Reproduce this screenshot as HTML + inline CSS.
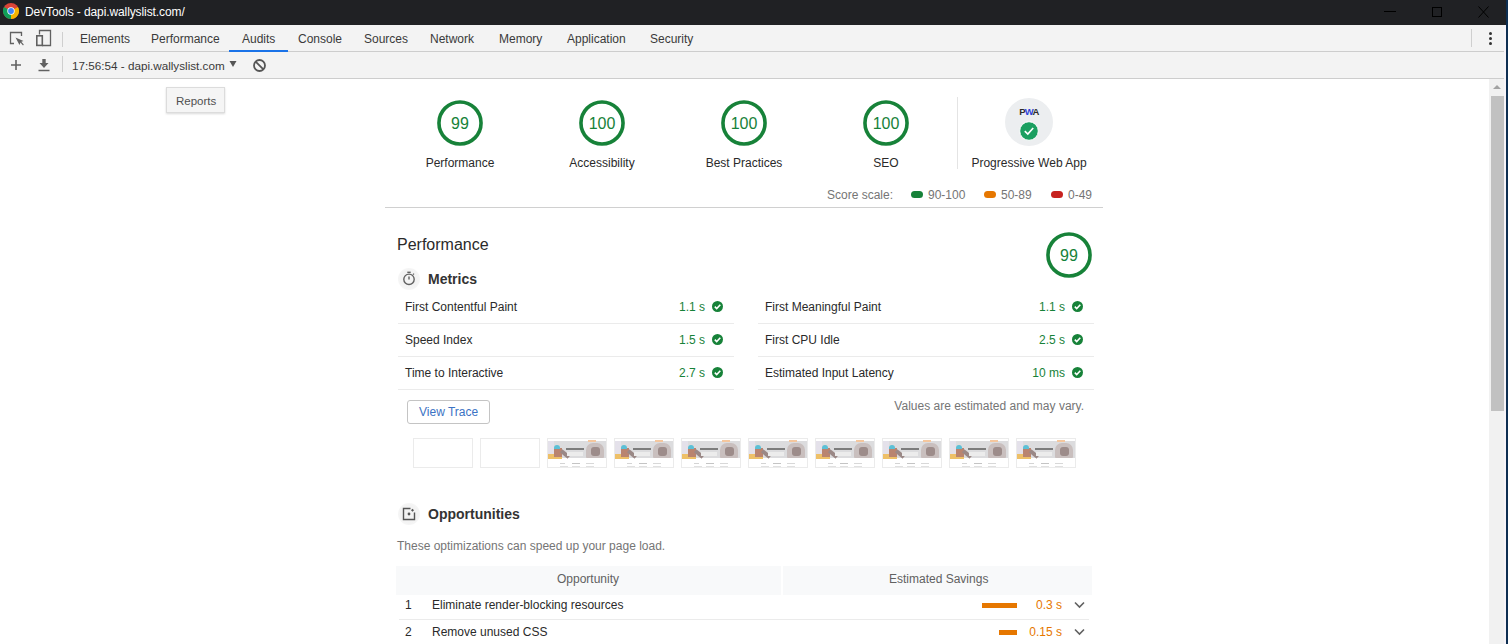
<!DOCTYPE html>
<html><head><meta charset="utf-8">
<style>
*{margin:0;padding:0;box-sizing:border-box}
html,body{width:1508px;height:644px;overflow:hidden;background:#fff;font-family:"Liberation Sans",sans-serif;position:relative}
.a{position:absolute}
.t{position:absolute;white-space:nowrap;line-height:12px;font-size:12px}
#title{left:0;top:0;width:1508px;height:25px;background:#202124}
#tb1{left:0;top:25px;width:1504px;height:27px;background:#f3f3f3;border-bottom:1px solid #cdcdcd}
#tb2{left:0;top:52px;width:1504px;height:27px;background:#f3f3f3;border-bottom:1px solid #cdcdcd}
.tab{color:#3a3a3a}
.sep{position:absolute;width:1px;background:#cfcfcf}
.lab{color:#2a2a2a}
.gray{color:#757575}
.green{color:#178239}
.row{position:absolute;height:1px;background:#ebebeb}
.chk{position:absolute;width:11px;height:11px}
.fr{position:absolute;width:60px;height:30px;border:1px solid #ebebeb;background:#fff;overflow:hidden}
</style></head><body>
<div id="title" class="a">
  <svg class="a" style="left:3px;top:3px" width="16" height="16" viewBox="0 0 16 16">
    <circle cx="8" cy="8" r="8" fill="#db4437"/>
    <path d="M8 8 L1.07 4 A8 8 0 0 0 8 16 Z" fill="#0f9d58"/>
    <path d="M8 8 L8 16 A8 8 0 0 0 14.93 4 Z" fill="#f4b400"/>
    <circle cx="8" cy="8" r="3.7" fill="#fff"/>
    <circle cx="8" cy="8" r="2.9" fill="#4285f4"/>
  </svg>
  <div class="t" style="left:25px;top:6px;color:#fff;letter-spacing:-0.1px">DevTools - dapi.wallyslist.com/</div>
  <div class="a" style="left:1384px;top:11px;width:12px;height:1px;background:#000"></div>
  <div class="a" style="left:1432px;top:7px;width:10px;height:10px;border:1px solid #000"></div>
  <svg class="a" style="left:1478px;top:6px" width="11" height="12" viewBox="0 0 11 12"><path d="M0.5 0.5 L10.5 11.5 M10.5 0.5 L0.5 11.5" stroke="#000" stroke-width="1"/></svg>
</div>
<div class="a" style="left:1506px;top:0;width:2px;height:644px;background:#0e2f52"></div>
<div class="a" style="left:1504px;top:25px;width:2px;height:619px;background:#f7f4f8"></div>

<div id="tb1" class="a">
<svg class="a" style="left:9px;top:6px" width="16" height="16" viewBox="0 0 16 16">
    <path d="M5 12.5 H1.5 V1.5 H12.5 V5" fill="none" stroke="#616161" stroke-width="1.3"/>
    <path d="M6.5 6.5 L10.5 14 L11.5 11.5 L14 14.5 L14.8 13.6 L12.3 10.8 L14.5 10 Z" fill="#616161"/>
  </svg>
  <svg class="a" style="left:35px;top:4px" width="17" height="18" viewBox="0 0 17 18">
    <path d="M4.5 5.5 V1.5 H15.5 V16.5 H7" fill="none" stroke="#616161" stroke-width="1.3"/>
    <rect x="1.8" y="6.8" width="5.5" height="9.6" fill="none" stroke="#616161" stroke-width="1.6"/>
  </svg>
  <div class="sep" style="left:62px;top:7px;height:15px"></div>
<div class="t tab" style="left:80px;top:8px">Elements</div>
<div class="t tab" style="left:151px;top:8px">Performance</div>
<div class="t tab" style="left:242px;top:8px">Audits</div>
<div class="t tab" style="left:298px;top:8px">Console</div>
<div class="t tab" style="left:364px;top:8px">Sources</div>
<div class="t tab" style="left:430px;top:8px">Network</div>
<div class="t tab" style="left:499px;top:8px">Memory</div>
<div class="t tab" style="left:567px;top:8px">Application</div>
<div class="t tab" style="left:650px;top:8px">Security</div>
<div class="a" style="left:229px;top:25px;width:59px;height:2px;background:#1a73e8"></div>
  <div class="sep" style="left:1471px;top:4px;height:18px"></div>
  <div class="a" style="left:1489px;top:7px;width:3px;height:3px;border-radius:50%;background:#333"></div>
  <div class="a" style="left:1489px;top:12px;width:3px;height:3px;border-radius:50%;background:#333"></div>
  <div class="a" style="left:1489px;top:17px;width:3px;height:3px;border-radius:50%;background:#333"></div>
</div>
<div id="tb2" class="a">
  <svg class="a" style="left:10px;top:7px" width="12" height="12" viewBox="0 0 12 12"><path d="M6 1 V11 M1 6 H11" stroke="#616161" stroke-width="1.6"/></svg>
  <svg class="a" style="left:37px;top:6px" width="14" height="14" viewBox="0 0 14 14">
    <path d="M5.3 1 H8.7 V5 H11.5 L7 10 L2.5 5 H5.3 Z" fill="#616161"/>
    <path d="M1.5 12.5 H12.5" stroke="#616161" stroke-width="1.5"/>
  </svg>
  <div class="sep" style="left:62px;top:4px;height:16px"></div>
  <div class="t" style="left:72px;top:8px;color:#3a3a3a;font-size:11.7px">17:56:54 - dapi.wallyslist.com</div>
  <svg class="a" style="left:229px;top:8px" width="8" height="8" viewBox="0 0 8 8"><path d="M0.5 1 H7.5 L4 7 Z" fill="#555"/></svg>
  <svg class="a" style="left:252px;top:6px" width="15" height="15" viewBox="0 0 15 15"><circle cx="7.5" cy="7.5" r="5.5" fill="none" stroke="#555" stroke-width="1.8"/><path d="M3.6 3.6 L11.4 11.4" stroke="#555" stroke-width="1.8"/></svg>
</div>
<div class="a" style="left:166px;top:87px;width:59px;height:26px;background:#f5f5f5;border:1px solid #dcdcdc;box-shadow:0 1px 2px rgba(0,0,0,0.15)"></div>
<div class="t" style="left:176px;top:95px;color:#505050;font-size:11.5px">Reports</div>
<div class="a" style="left:1489px;top:79px;width:15px;height:565px;background:#f1f1f1"></div>
<svg class="a" style="left:1493px;top:84px" width="8" height="6" viewBox="0 0 8 6"><path d="M0 5 L4 1 L8 5 Z" fill="#a3a3a3"/></svg>
<div class="a" style="left:1491px;top:96px;width:13px;height:315px;background:#c1c1c1"></div>

<svg class="a" style="left:436px;top:99px" width="48" height="48" viewBox="0 0 48 48"><circle cx="24" cy="24" r="21.05" fill="none" stroke="#178239" stroke-width="3.6"/></svg><div class="t green" style="left:420px;width:80px;text-align:center;top:116px;font-size:16px;line-height:16px">99</div>
<div class="t lab" style="left:400px;width:120px;text-align:center;top:157px">Performance</div>
<svg class="a" style="left:578px;top:99px" width="48" height="48" viewBox="0 0 48 48"><circle cx="24" cy="24" r="21.05" fill="none" stroke="#178239" stroke-width="3.6"/></svg><div class="t green" style="left:562px;width:80px;text-align:center;top:116px;font-size:16px;line-height:16px">100</div>
<div class="t lab" style="left:542px;width:120px;text-align:center;top:157px">Accessibility</div>
<svg class="a" style="left:720px;top:99px" width="48" height="48" viewBox="0 0 48 48"><circle cx="24" cy="24" r="21.05" fill="none" stroke="#178239" stroke-width="3.6"/></svg><div class="t green" style="left:704px;width:80px;text-align:center;top:116px;font-size:16px;line-height:16px">100</div>
<div class="t lab" style="left:684px;width:120px;text-align:center;top:157px">Best Practices</div>
<svg class="a" style="left:862px;top:99px" width="48" height="48" viewBox="0 0 48 48"><circle cx="24" cy="24" r="21.05" fill="none" stroke="#178239" stroke-width="3.6"/></svg><div class="t green" style="left:846px;width:80px;text-align:center;top:116px;font-size:16px;line-height:16px">100</div>
<div class="t lab" style="left:826px;width:120px;text-align:center;top:157px">SEO</div>
<div class="a" style="left:957px;top:97px;width:1px;height:72px;background:#e4e4e4"></div>
<div class="a" style="left:1005px;top:98px;width:48px;height:48px;border-radius:50%;background:#eceef0"></div>
<div class="t" style="left:1000px;width:58px;text-align:center;top:107px;font-size:9.5px;line-height:10px;font-weight:bold;color:#2b2b2b;letter-spacing:-0.7px">P<span style="color:#2c3fd8">W</span>A</div>
<svg class="a" style="left:1019px;top:121px" width="20" height="20" viewBox="0 0 20 20"><circle cx="10" cy="10" r="9.3" fill="#1a9f60" stroke="#fff" stroke-width="1"/><path d="M5.8 10.2 L8.8 13 L14.2 7" fill="none" stroke="#fff" stroke-width="1.7"/></svg>
<div class="t lab" style="left:969px;width:120px;text-align:center;top:157px">Progressive Web App</div>

<div class="t gray" style="left:827px;top:189px">Score scale:</div>
<div class="a" style="left:911px;top:191px;width:12px;height:7px;border-radius:4px;background:#178239"></div>
<div class="t gray" style="left:928px;top:189px">90-100</div>
<div class="a" style="left:984px;top:191px;width:12px;height:7px;border-radius:4px;background:#e67700"></div>
<div class="t gray" style="left:1001px;top:189px">50-89</div>
<div class="a" style="left:1051px;top:191px;width:12px;height:7px;border-radius:4px;background:#c7221f"></div>
<div class="t gray" style="left:1068px;top:189px">0-49</div>
<div class="a" style="left:385px;top:207px;width:718px;height:1px;background:#d0d0d0"></div>

<div class="t lab" style="left:397px;top:237px;font-size:16px;line-height:16px">Performance</div>
<svg class="a" style="left:1045px;top:231px" width="48" height="48" viewBox="0 0 48 48"><circle cx="24" cy="24" r="21.05" fill="none" stroke="#178239" stroke-width="3.6"/></svg><div class="t green" style="left:1029px;width:80px;text-align:center;top:248px;font-size:16px;line-height:16px">99</div>
<div class="a" style="left:398px;top:268px;width:22px;height:22px;border-radius:50%;background:radial-gradient(circle,#f3f3f3 55%,#fbfbfb 100%)"></div>
<svg class="a" style="left:402px;top:271px" width="14" height="15" viewBox="0 0 14 15"><circle cx="7" cy="8.3" r="5.2" fill="none" stroke="#616161" stroke-width="1.4"/><path d="M5.3 1.3 H8.7" stroke="#616161" stroke-width="1.4"/><path d="M11 3.6 L12 2.6" stroke="#616161" stroke-width="1.2"/><path d="M7 5.5 V8.5" stroke="#616161" stroke-width="1.4"/></svg>
<div class="t" style="left:428px;top:272px;font-size:14px;line-height:14px;font-weight:bold;color:#333">Metrics</div>

<div class="t lab" style="left:405px;top:301px">First Contentful Paint</div>
<div class="t green" style="left:605px;width:100px;text-align:right;top:301px">1.1 s</div>
<svg class="chk" style="left:712px;top:301px" viewBox="0 0 11 11"><circle cx="5.5" cy="5.5" r="5.5" fill="#178239"/><path d="M2.8 5.6 L4.7 7.5 L8.3 3.8" fill="none" stroke="#fff" stroke-width="1.6"/></svg>
<div class="row" style="left:398px;top:323px;width:336px"></div>
<div class="t lab" style="left:765px;top:301px">First Meaningful Paint</div>
<div class="t green" style="left:965px;width:100px;text-align:right;top:301px">1.1 s</div>
<svg class="chk" style="left:1072px;top:301px" viewBox="0 0 11 11"><circle cx="5.5" cy="5.5" r="5.5" fill="#178239"/><path d="M2.8 5.6 L4.7 7.5 L8.3 3.8" fill="none" stroke="#fff" stroke-width="1.6"/></svg>
<div class="row" style="left:758px;top:323px;width:336px"></div>
<div class="t lab" style="left:405px;top:334px">Speed Index</div>
<div class="t green" style="left:605px;width:100px;text-align:right;top:334px">1.5 s</div>
<svg class="chk" style="left:712px;top:334px" viewBox="0 0 11 11"><circle cx="5.5" cy="5.5" r="5.5" fill="#178239"/><path d="M2.8 5.6 L4.7 7.5 L8.3 3.8" fill="none" stroke="#fff" stroke-width="1.6"/></svg>
<div class="row" style="left:398px;top:356px;width:336px"></div>
<div class="t lab" style="left:765px;top:334px">First CPU Idle</div>
<div class="t green" style="left:965px;width:100px;text-align:right;top:334px">2.5 s</div>
<svg class="chk" style="left:1072px;top:334px" viewBox="0 0 11 11"><circle cx="5.5" cy="5.5" r="5.5" fill="#178239"/><path d="M2.8 5.6 L4.7 7.5 L8.3 3.8" fill="none" stroke="#fff" stroke-width="1.6"/></svg>
<div class="row" style="left:758px;top:356px;width:336px"></div>
<div class="t lab" style="left:405px;top:367px">Time to Interactive</div>
<div class="t green" style="left:605px;width:100px;text-align:right;top:367px">2.7 s</div>
<svg class="chk" style="left:712px;top:367px" viewBox="0 0 11 11"><circle cx="5.5" cy="5.5" r="5.5" fill="#178239"/><path d="M2.8 5.6 L4.7 7.5 L8.3 3.8" fill="none" stroke="#fff" stroke-width="1.6"/></svg>
<div class="row" style="left:398px;top:389px;width:336px"></div>
<div class="t lab" style="left:765px;top:367px">Estimated Input Latency</div>
<div class="t green" style="left:965px;width:100px;text-align:right;top:367px">10 ms</div>
<svg class="chk" style="left:1072px;top:367px" viewBox="0 0 11 11"><circle cx="5.5" cy="5.5" r="5.5" fill="#178239"/><path d="M2.8 5.6 L4.7 7.5 L8.3 3.8" fill="none" stroke="#fff" stroke-width="1.6"/></svg>
<div class="row" style="left:758px;top:389px;width:336px"></div>
<div class="a" style="left:407px;top:400px;width:83px;height:24px;border:1px solid #c4c4c4;border-radius:3px;background:#fff"></div>
<div class="t" style="left:419px;top:406px;color:#3b73c4">View Trace</div>
<div class="t gray" style="left:884px;width:200px;text-align:right;top:400px">Values are estimated and may vary.</div>

<div class="fr" style="left:413px;top:438px"></div>
<div class="fr" style="left:480px;top:438px"></div>
<div class="fr" style="left:547px;top:438px">
<div class="a" style="left:0;top:2px;width:58px;height:17px;background:#dcdcde"></div>
<div class="a" style="left:0;top:2px;width:6px;height:17px;background:#e4e1ea"></div>
<div class="a" style="left:40px;top:1px;width:8px;height:2px;background:#f5c79e"></div>
<div class="a" style="left:0;top:15px;width:14px;height:5px;background:#eec068;filter:blur(0.6px)"></div>
<div class="a" style="left:6px;top:9px;width:8px;height:9px;background:#b98470;filter:blur(0.6px)"></div>
<div class="a" style="left:6px;top:6px;width:6px;height:4px;border-radius:3px 3px 0 0;background:#5cc0d6;filter:blur(0.4px)"></div>
<div class="a" style="left:12px;top:13px;width:10px;height:4px;transform:rotate(40deg);background:#9a8886;filter:blur(0.6px)"></div>
<div class="a" style="left:18px;top:9px;width:18px;height:2px;background:#7c7c7c;filter:blur(0.3px)"></div>
<div class="a" style="left:19px;top:13px;width:16px;height:4px;background:#ececec;filter:blur(0.5px)"></div>
<div class="a" style="left:38px;top:4px;width:18px;height:15px;border-radius:7px 7px 1px 1px;background:#c9bfbe;filter:blur(0.7px)"></div>
<div class="a" style="left:43px;top:8px;width:9px;height:9px;border-radius:3px;background:#9d8c8a;filter:blur(0.7px)"></div>
<div class="a" style="left:12px;top:24px;width:5px;height:1px;background:#d4d4d4"></div>
<div class="a" style="left:24px;top:24px;width:8px;height:1px;background:#c4c4c4"></div>
<div class="a" style="left:38px;top:24px;width:8px;height:1px;background:#d8d8d8"></div>
<div class="a" style="left:12px;top:27px;width:8px;height:1px;background:#e0e0e0"></div>
<div class="a" style="left:24px;top:27px;width:8px;height:1px;background:#e0e0e0"></div>
<div class="a" style="left:38px;top:27px;width:8px;height:1px;background:#e0e0e0"></div>
</div>
<div class="fr" style="left:614px;top:438px">
<div class="a" style="left:0;top:2px;width:58px;height:17px;background:#dcdcde"></div>
<div class="a" style="left:0;top:2px;width:6px;height:17px;background:#e4e1ea"></div>
<div class="a" style="left:40px;top:1px;width:8px;height:2px;background:#f5c79e"></div>
<div class="a" style="left:0;top:15px;width:14px;height:5px;background:#eec068;filter:blur(0.6px)"></div>
<div class="a" style="left:6px;top:9px;width:8px;height:9px;background:#b98470;filter:blur(0.6px)"></div>
<div class="a" style="left:6px;top:6px;width:6px;height:4px;border-radius:3px 3px 0 0;background:#5cc0d6;filter:blur(0.4px)"></div>
<div class="a" style="left:12px;top:13px;width:10px;height:4px;transform:rotate(40deg);background:#9a8886;filter:blur(0.6px)"></div>
<div class="a" style="left:18px;top:9px;width:18px;height:2px;background:#7c7c7c;filter:blur(0.3px)"></div>
<div class="a" style="left:19px;top:13px;width:16px;height:4px;background:#ececec;filter:blur(0.5px)"></div>
<div class="a" style="left:38px;top:4px;width:18px;height:15px;border-radius:7px 7px 1px 1px;background:#c9bfbe;filter:blur(0.7px)"></div>
<div class="a" style="left:43px;top:8px;width:9px;height:9px;border-radius:3px;background:#9d8c8a;filter:blur(0.7px)"></div>
<div class="a" style="left:12px;top:24px;width:5px;height:1px;background:#d4d4d4"></div>
<div class="a" style="left:24px;top:24px;width:8px;height:1px;background:#c4c4c4"></div>
<div class="a" style="left:38px;top:24px;width:8px;height:1px;background:#d8d8d8"></div>
<div class="a" style="left:12px;top:27px;width:8px;height:1px;background:#e0e0e0"></div>
<div class="a" style="left:24px;top:27px;width:8px;height:1px;background:#e0e0e0"></div>
<div class="a" style="left:38px;top:27px;width:8px;height:1px;background:#e0e0e0"></div>
</div>
<div class="fr" style="left:681px;top:438px">
<div class="a" style="left:0;top:2px;width:58px;height:17px;background:#dcdcde"></div>
<div class="a" style="left:0;top:2px;width:6px;height:17px;background:#e4e1ea"></div>
<div class="a" style="left:40px;top:1px;width:8px;height:2px;background:#f5c79e"></div>
<div class="a" style="left:0;top:15px;width:14px;height:5px;background:#eec068;filter:blur(0.6px)"></div>
<div class="a" style="left:6px;top:9px;width:8px;height:9px;background:#b98470;filter:blur(0.6px)"></div>
<div class="a" style="left:6px;top:6px;width:6px;height:4px;border-radius:3px 3px 0 0;background:#5cc0d6;filter:blur(0.4px)"></div>
<div class="a" style="left:12px;top:13px;width:10px;height:4px;transform:rotate(40deg);background:#9a8886;filter:blur(0.6px)"></div>
<div class="a" style="left:18px;top:9px;width:18px;height:2px;background:#7c7c7c;filter:blur(0.3px)"></div>
<div class="a" style="left:19px;top:13px;width:16px;height:4px;background:#ececec;filter:blur(0.5px)"></div>
<div class="a" style="left:38px;top:4px;width:18px;height:15px;border-radius:7px 7px 1px 1px;background:#c9bfbe;filter:blur(0.7px)"></div>
<div class="a" style="left:43px;top:8px;width:9px;height:9px;border-radius:3px;background:#9d8c8a;filter:blur(0.7px)"></div>
<div class="a" style="left:12px;top:24px;width:5px;height:1px;background:#d4d4d4"></div>
<div class="a" style="left:24px;top:24px;width:8px;height:1px;background:#c4c4c4"></div>
<div class="a" style="left:38px;top:24px;width:8px;height:1px;background:#d8d8d8"></div>
<div class="a" style="left:12px;top:27px;width:8px;height:1px;background:#e0e0e0"></div>
<div class="a" style="left:24px;top:27px;width:8px;height:1px;background:#e0e0e0"></div>
<div class="a" style="left:38px;top:27px;width:8px;height:1px;background:#e0e0e0"></div>
</div>
<div class="fr" style="left:748px;top:438px">
<div class="a" style="left:0;top:2px;width:58px;height:17px;background:#dcdcde"></div>
<div class="a" style="left:0;top:2px;width:6px;height:17px;background:#e4e1ea"></div>
<div class="a" style="left:40px;top:1px;width:8px;height:2px;background:#f5c79e"></div>
<div class="a" style="left:0;top:15px;width:14px;height:5px;background:#eec068;filter:blur(0.6px)"></div>
<div class="a" style="left:6px;top:9px;width:8px;height:9px;background:#b98470;filter:blur(0.6px)"></div>
<div class="a" style="left:6px;top:6px;width:6px;height:4px;border-radius:3px 3px 0 0;background:#5cc0d6;filter:blur(0.4px)"></div>
<div class="a" style="left:12px;top:13px;width:10px;height:4px;transform:rotate(40deg);background:#9a8886;filter:blur(0.6px)"></div>
<div class="a" style="left:18px;top:9px;width:18px;height:2px;background:#7c7c7c;filter:blur(0.3px)"></div>
<div class="a" style="left:19px;top:13px;width:16px;height:4px;background:#ececec;filter:blur(0.5px)"></div>
<div class="a" style="left:38px;top:4px;width:18px;height:15px;border-radius:7px 7px 1px 1px;background:#c9bfbe;filter:blur(0.7px)"></div>
<div class="a" style="left:43px;top:8px;width:9px;height:9px;border-radius:3px;background:#9d8c8a;filter:blur(0.7px)"></div>
<div class="a" style="left:12px;top:24px;width:5px;height:1px;background:#d4d4d4"></div>
<div class="a" style="left:24px;top:24px;width:8px;height:1px;background:#c4c4c4"></div>
<div class="a" style="left:38px;top:24px;width:8px;height:1px;background:#d8d8d8"></div>
<div class="a" style="left:12px;top:27px;width:8px;height:1px;background:#e0e0e0"></div>
<div class="a" style="left:24px;top:27px;width:8px;height:1px;background:#e0e0e0"></div>
<div class="a" style="left:38px;top:27px;width:8px;height:1px;background:#e0e0e0"></div>
</div>
<div class="fr" style="left:815px;top:438px">
<div class="a" style="left:0;top:2px;width:58px;height:17px;background:#dcdcde"></div>
<div class="a" style="left:0;top:2px;width:6px;height:17px;background:#e4e1ea"></div>
<div class="a" style="left:40px;top:1px;width:8px;height:2px;background:#f5c79e"></div>
<div class="a" style="left:0;top:15px;width:14px;height:5px;background:#eec068;filter:blur(0.6px)"></div>
<div class="a" style="left:6px;top:9px;width:8px;height:9px;background:#b98470;filter:blur(0.6px)"></div>
<div class="a" style="left:6px;top:6px;width:6px;height:4px;border-radius:3px 3px 0 0;background:#5cc0d6;filter:blur(0.4px)"></div>
<div class="a" style="left:12px;top:13px;width:10px;height:4px;transform:rotate(40deg);background:#9a8886;filter:blur(0.6px)"></div>
<div class="a" style="left:18px;top:9px;width:18px;height:2px;background:#7c7c7c;filter:blur(0.3px)"></div>
<div class="a" style="left:19px;top:13px;width:16px;height:4px;background:#ececec;filter:blur(0.5px)"></div>
<div class="a" style="left:38px;top:4px;width:18px;height:15px;border-radius:7px 7px 1px 1px;background:#c9bfbe;filter:blur(0.7px)"></div>
<div class="a" style="left:43px;top:8px;width:9px;height:9px;border-radius:3px;background:#9d8c8a;filter:blur(0.7px)"></div>
<div class="a" style="left:12px;top:24px;width:5px;height:1px;background:#d4d4d4"></div>
<div class="a" style="left:24px;top:24px;width:8px;height:1px;background:#c4c4c4"></div>
<div class="a" style="left:38px;top:24px;width:8px;height:1px;background:#d8d8d8"></div>
<div class="a" style="left:12px;top:27px;width:8px;height:1px;background:#e0e0e0"></div>
<div class="a" style="left:24px;top:27px;width:8px;height:1px;background:#e0e0e0"></div>
<div class="a" style="left:38px;top:27px;width:8px;height:1px;background:#e0e0e0"></div>
</div>
<div class="fr" style="left:882px;top:438px">
<div class="a" style="left:0;top:2px;width:58px;height:17px;background:#dcdcde"></div>
<div class="a" style="left:0;top:2px;width:6px;height:17px;background:#e4e1ea"></div>
<div class="a" style="left:40px;top:1px;width:8px;height:2px;background:#f5c79e"></div>
<div class="a" style="left:0;top:15px;width:14px;height:5px;background:#eec068;filter:blur(0.6px)"></div>
<div class="a" style="left:6px;top:9px;width:8px;height:9px;background:#b98470;filter:blur(0.6px)"></div>
<div class="a" style="left:6px;top:6px;width:6px;height:4px;border-radius:3px 3px 0 0;background:#5cc0d6;filter:blur(0.4px)"></div>
<div class="a" style="left:12px;top:13px;width:10px;height:4px;transform:rotate(40deg);background:#9a8886;filter:blur(0.6px)"></div>
<div class="a" style="left:18px;top:9px;width:18px;height:2px;background:#7c7c7c;filter:blur(0.3px)"></div>
<div class="a" style="left:19px;top:13px;width:16px;height:4px;background:#ececec;filter:blur(0.5px)"></div>
<div class="a" style="left:38px;top:4px;width:18px;height:15px;border-radius:7px 7px 1px 1px;background:#c9bfbe;filter:blur(0.7px)"></div>
<div class="a" style="left:43px;top:8px;width:9px;height:9px;border-radius:3px;background:#9d8c8a;filter:blur(0.7px)"></div>
<div class="a" style="left:12px;top:24px;width:5px;height:1px;background:#d4d4d4"></div>
<div class="a" style="left:24px;top:24px;width:8px;height:1px;background:#c4c4c4"></div>
<div class="a" style="left:38px;top:24px;width:8px;height:1px;background:#d8d8d8"></div>
<div class="a" style="left:12px;top:27px;width:8px;height:1px;background:#e0e0e0"></div>
<div class="a" style="left:24px;top:27px;width:8px;height:1px;background:#e0e0e0"></div>
<div class="a" style="left:38px;top:27px;width:8px;height:1px;background:#e0e0e0"></div>
</div>
<div class="fr" style="left:949px;top:438px">
<div class="a" style="left:0;top:2px;width:58px;height:17px;background:#dcdcde"></div>
<div class="a" style="left:0;top:2px;width:6px;height:17px;background:#e4e1ea"></div>
<div class="a" style="left:40px;top:1px;width:8px;height:2px;background:#f5c79e"></div>
<div class="a" style="left:0;top:15px;width:14px;height:5px;background:#eec068;filter:blur(0.6px)"></div>
<div class="a" style="left:6px;top:9px;width:8px;height:9px;background:#b98470;filter:blur(0.6px)"></div>
<div class="a" style="left:6px;top:6px;width:6px;height:4px;border-radius:3px 3px 0 0;background:#5cc0d6;filter:blur(0.4px)"></div>
<div class="a" style="left:12px;top:13px;width:10px;height:4px;transform:rotate(40deg);background:#9a8886;filter:blur(0.6px)"></div>
<div class="a" style="left:18px;top:9px;width:18px;height:2px;background:#7c7c7c;filter:blur(0.3px)"></div>
<div class="a" style="left:19px;top:13px;width:16px;height:4px;background:#ececec;filter:blur(0.5px)"></div>
<div class="a" style="left:38px;top:4px;width:18px;height:15px;border-radius:7px 7px 1px 1px;background:#c9bfbe;filter:blur(0.7px)"></div>
<div class="a" style="left:43px;top:8px;width:9px;height:9px;border-radius:3px;background:#9d8c8a;filter:blur(0.7px)"></div>
<div class="a" style="left:12px;top:24px;width:5px;height:1px;background:#d4d4d4"></div>
<div class="a" style="left:24px;top:24px;width:8px;height:1px;background:#c4c4c4"></div>
<div class="a" style="left:38px;top:24px;width:8px;height:1px;background:#d8d8d8"></div>
<div class="a" style="left:12px;top:27px;width:8px;height:1px;background:#e0e0e0"></div>
<div class="a" style="left:24px;top:27px;width:8px;height:1px;background:#e0e0e0"></div>
<div class="a" style="left:38px;top:27px;width:8px;height:1px;background:#e0e0e0"></div>
</div>
<div class="fr" style="left:1016px;top:438px">
<div class="a" style="left:0;top:2px;width:58px;height:17px;background:#dcdcde"></div>
<div class="a" style="left:0;top:2px;width:6px;height:17px;background:#e4e1ea"></div>
<div class="a" style="left:40px;top:1px;width:8px;height:2px;background:#f5c79e"></div>
<div class="a" style="left:0;top:15px;width:14px;height:5px;background:#eec068;filter:blur(0.6px)"></div>
<div class="a" style="left:6px;top:9px;width:8px;height:9px;background:#b98470;filter:blur(0.6px)"></div>
<div class="a" style="left:6px;top:6px;width:6px;height:4px;border-radius:3px 3px 0 0;background:#5cc0d6;filter:blur(0.4px)"></div>
<div class="a" style="left:12px;top:13px;width:10px;height:4px;transform:rotate(40deg);background:#9a8886;filter:blur(0.6px)"></div>
<div class="a" style="left:18px;top:9px;width:18px;height:2px;background:#7c7c7c;filter:blur(0.3px)"></div>
<div class="a" style="left:19px;top:13px;width:16px;height:4px;background:#ececec;filter:blur(0.5px)"></div>
<div class="a" style="left:38px;top:4px;width:18px;height:15px;border-radius:7px 7px 1px 1px;background:#c9bfbe;filter:blur(0.7px)"></div>
<div class="a" style="left:43px;top:8px;width:9px;height:9px;border-radius:3px;background:#9d8c8a;filter:blur(0.7px)"></div>
<div class="a" style="left:12px;top:24px;width:5px;height:1px;background:#d4d4d4"></div>
<div class="a" style="left:24px;top:24px;width:8px;height:1px;background:#c4c4c4"></div>
<div class="a" style="left:38px;top:24px;width:8px;height:1px;background:#d8d8d8"></div>
<div class="a" style="left:12px;top:27px;width:8px;height:1px;background:#e0e0e0"></div>
<div class="a" style="left:24px;top:27px;width:8px;height:1px;background:#e0e0e0"></div>
<div class="a" style="left:38px;top:27px;width:8px;height:1px;background:#e0e0e0"></div>
</div>
<div class="a" style="left:398px;top:503px;width:22px;height:22px;border-radius:50%;background:radial-gradient(circle,#f3f3f3 55%,#fbfbfb 100%)"></div>
<svg class="a" style="left:402px;top:507px" width="14" height="14" viewBox="0 0 14 14"><path d="M8.5 1.5 H1.5 V12.5 H12.5 V5.5" fill="none" stroke="#555" stroke-width="1.4"/><circle cx="7" cy="7" r="1.4" fill="#555"/><path d="M10.5 1.8 L12 3.3 L10.5 4.8 L9 3.3 Z" fill="#555"/></svg>
<div class="t" style="left:428px;top:507px;font-size:14px;line-height:14px;font-weight:bold;color:#333">Opportunities</div>
<div class="t gray" style="left:397px;top:540px">These optimizations can speed up your page load.</div>
<div class="a" style="left:396px;top:566px;width:385px;height:29px;background:#f8f9fa"></div>
<div class="a" style="left:783px;top:566px;width:309px;height:29px;background:#f8f9fa"></div>
<div class="t" style="left:557px;top:573px;color:#616161">Opportunity</div>
<div class="t" style="left:889px;top:573px;color:#616161">Estimated Savings</div>
<div class="t lab" style="left:405px;top:599px">1</div>
<div class="t lab" style="left:432px;top:599px">Eliminate render-blocking resources</div>
<div class="row" style="left:399px;top:619px;width:690px"></div>
<div class="a" style="left:982px;top:603px;width:35px;height:5px;background:#e67700"></div>
<div class="t" style="left:962px;width:100px;text-align:right;top:599px;color:#e67700">0.3 s</div>
<svg class="a" style="left:1074px;top:601px" width="11" height="8" viewBox="0 0 11 8"><path d="M1 1.5 L5.5 6 L10 1.5" fill="none" stroke="#616161" stroke-width="1.6"/></svg>
<div class="t lab" style="left:405px;top:626px">2</div>
<div class="t lab" style="left:432px;top:626px">Remove unused CSS</div>
<div class="a" style="left:999px;top:630px;width:18px;height:5px;background:#e67700"></div>
<div class="t" style="left:962px;width:100px;text-align:right;top:626px;color:#e67700">0.15 s</div>
<svg class="a" style="left:1074px;top:628px" width="11" height="8" viewBox="0 0 11 8"><path d="M1 1.5 L5.5 6 L10 1.5" fill="none" stroke="#616161" stroke-width="1.6"/></svg>

</body></html>
